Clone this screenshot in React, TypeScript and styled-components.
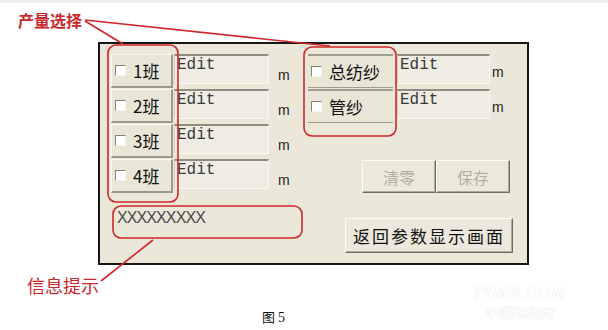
import * as React from "react";
import styled, { createGlobalStyle } from "styled-components";

const Global = createGlobalStyle`
  html, body { margin: 0; padding: 0; background: #fff; }
`;

const Page = styled.div`
  position: relative;
  width: 608px;
  height: 330px;
  box-sizing: border-box;
  padding-top: 10px;
  overflow: hidden;
  background: linear-gradient(#f0f0f0 0 3px, #fff 3px);
  font-family: "Noto Sans CJK SC", sans-serif;
`;

const Callout = styled.div<{ $size: number; $bold?: boolean; $left: number }>`
  margin-left: ${(p) => p.$left}px;
  font-size: ${(p) => p.$size}px;
  font-weight: ${(p) => (p.$bold ? 700 : 400)};
  line-height: 20px;
  color: #c9282d;
`;

const Panel = styled.div`
  margin: 12px 0 0 98px;
  width: 431px;
  height: 223px;
  box-sizing: border-box;
  border: 2px solid #161616;
  background: #ebe8d9;
  padding: 10px 14px 0 11px;
  display: flex;
  flex-direction: column;
`;

const TopArea = styled.div`
  display: flex;
`;

const Column = styled.div<{ $width?: number }>`
  display: flex;
  flex-direction: column;
  gap: 1px;
  ${(p) => (p.$width ? `width: ${p.$width}px;` : "flex: 1;")}
`;

const Row = styled.div`
  display: flex;
  height: 34px;
`;

const CheckButton = styled.div<{ $width: number; $flat?: boolean }>`
  width: ${(p) => p.$width}px;
  box-sizing: border-box;
  display: flex;
  align-items: center;
  padding-left: 3px;
  background: #e9e6d8;
  ${(p) =>
    p.$flat
      ? `
    border-top: 2px solid #a09e91;
    border-bottom: 1px solid #a09e91;
  `
      : `
    border-top: 1px solid #fbfaf4;
    border-left: 1px solid #fbfaf4;
    border-bottom: 2px solid #9c998b;
    border-right: 2px solid #9c998b;
  `}
`;

const Box = styled.span`
  width: 11px;
  height: 11px;
  box-sizing: border-box;
  margin-right: 7px;
  background: #fff;
  border-top: 1px solid #858274;
  border-left: 1px solid #858274;
  border-bottom: 1px solid #f4f3ee;
  border-right: 1px solid #f4f3ee;
`;

const CheckLabel = styled.span`
  font-size: 17px;
  line-height: 20px;
  color: #111;
`;

const Edit = styled.div<{ $width: number; $gap: number }>`
  width: ${(p) => p.$width}px;
  margin-left: ${(p) => p.$gap}px;
  height: 30px;
  box-sizing: border-box;
  border-top: 2px solid #8f8d82;
  border-left: 1px solid #cfccbe;
  border-bottom: 1px solid #f8f7f1;
  border-right: 1px solid #f8f7f1;
  background: #efede3;
  padding: 0 2px;
  font-family: "Liberation Mono", monospace;
  font-size: 16px;
  line-height: 18px;
  color: #3a3a3a;
`;

const Unit = styled.span<{ $gap: number; $lift?: number }>`
  margin-left: ${(p) => p.$gap}px;
  align-self: flex-end;
  padding-bottom: ${(p) => 5 + (p.$lift || 0)}px;
  font-family: "Liberation Sans", sans-serif;
  font-size: 14px;
  line-height: 16px;
  color: #222;
`;

const ActionBar = styled.div`
  margin-top: auto;
  margin-left: 54px;
  display: flex;
`;

const PushButton = styled.div<{ $width: number; $height: number; $disabled?: boolean }>`
  width: ${(p) => p.$width}px;
  height: ${(p) => p.$height}px;
  box-sizing: border-box;
  display: flex;
  align-items: center;
  justify-content: center;
  background: #ece9dc;
  border-top: 1px solid #fdfcf7;
  border-left: 1px solid #fdfcf7;
  border-bottom: 1px solid #6f6d62;
  border-right: 1px solid #6f6d62;
  box-shadow: inset -1px -1px #aeab9c;
  font-size: ${(p) => (p.$disabled ? 16 : 17)}px;
  letter-spacing: ${(p) => (p.$disabled ? 0 : 2)}px;
  color: ${(p) => (p.$disabled ? "#b3b0a2" : "#111")};
`;

const BottomRow = styled.div`
  display: flex;
  align-items: flex-start;
  margin-top: 15px;
`;

const InfoText = styled.div`
  margin-left: 6px;
  font-family: "Liberation Sans", sans-serif;
  font-size: 16px;
  letter-spacing: -0.9px;
  line-height: 20px;
  color: #4a4a4a;
`;

const ReturnSlot = styled.div`
  margin-left: auto;
  margin-top: 10px;
`;

const Caption = styled.div`
  margin: 14px 0 0 262px;
  font-size: 13px;
  line-height: 16px;
  color: #111;
  span {
    font-family: "Liberation Serif", serif;
    font-size: 14px;
    margin-left: 3px;
  }
`;

const Watermark = styled.div`
  position: absolute;
  left: 460px;
  top: 285px;
  width: 118px;
  text-align: center;
  color: #fff;
  text-shadow: 0 0 1px #e0e0e0, 0 0 1px #e6e6e6;
  font-weight: 700;
  b {
    display: block;
    font-family: "Liberation Sans", sans-serif;
    font-style: italic;
    font-size: 16px;
    line-height: 18px;
    letter-spacing: 1px;
  }
  i {
    display: block;
    margin-top: 1px;
    font-style: italic;
    font-size: 14px;
    line-height: 17px;
  }
`;

const Overlay = styled.svg`
  position: absolute;
  left: 0;
  top: 0;
  pointer-events: none;
`;

const leftRows = ["1班", "2班", "3班", "4班"];
const rightRows = ["总纺纱", "管纱"];

function Annotations() {
  return (
    <Overlay width="608" height="330" viewBox="0 0 608 330">
      <g fill="none" stroke="#d0262b" strokeWidth="1.6">
        <rect x="108" y="45" width="70" height="157" rx="8" />
        <rect x="304" y="47" width="92" height="89" rx="8" />
        <rect x="113" y="206" width="189" height="32" rx="8" />
        <line x1="85" y1="21" x2="123" y2="44" />
        <line x1="85" y1="20" x2="330" y2="46" />
        <line x1="101" y1="281" x2="153" y2="240" />
      </g>
    </Overlay>
  );
}

export default function App() {
  return (
    <Page>
      <Global />
      <Callout $size={16} $bold $left={18}>
        产量选择
      </Callout>
      <Panel>
        <TopArea>
          <Column $width={197}>
            {leftRows.map((label) => (
              <Row key={label}>
                <CheckButton $width={62}>
                  <Box />
                  <CheckLabel>{label}</CheckLabel>
                </CheckButton>
                <Edit $width={95} $gap={1}>
                  Edit
                </Edit>
                <Unit $gap={9}>m</Unit>
              </Row>
            ))}
          </Column>
          <Column>
            {rightRows.map((label) => (
              <Row key={label}>
                <CheckButton $width={85} $flat>
                  <Box />
                  <CheckLabel>{label}</CheckLabel>
                </CheckButton>
                <Edit $width={93} $gap={4}>
                  Edit
                </Edit>
                <Unit $gap={2} $lift={3}>
                  m
                </Unit>
              </Row>
            ))}
            <ActionBar>
              <PushButton $width={74} $height={33} $disabled>
                清零
              </PushButton>
              <PushButton $width={74} $height={33} $disabled>
                保存
              </PushButton>
            </ActionBar>
          </Column>
        </TopArea>
        <BottomRow>
          <InfoText>XXXXXXXXX</InfoText>
          <ReturnSlot>
            <PushButton $width={168} $height={35}>
              返回参数显示画面
            </PushButton>
          </ReturnSlot>
        </BottomRow>
      </Panel>
      <Callout $size={18} $left={27} style={{ marginTop: 10 }}>
        信息提示
      </Callout>
      <Caption>
        图<span>5</span>
      </Caption>
      <Watermark>
        <b>TTMN.COM</b>
        <i>中国纺织网</i>
      </Watermark>
      <Annotations />
    </Page>
  );
}
